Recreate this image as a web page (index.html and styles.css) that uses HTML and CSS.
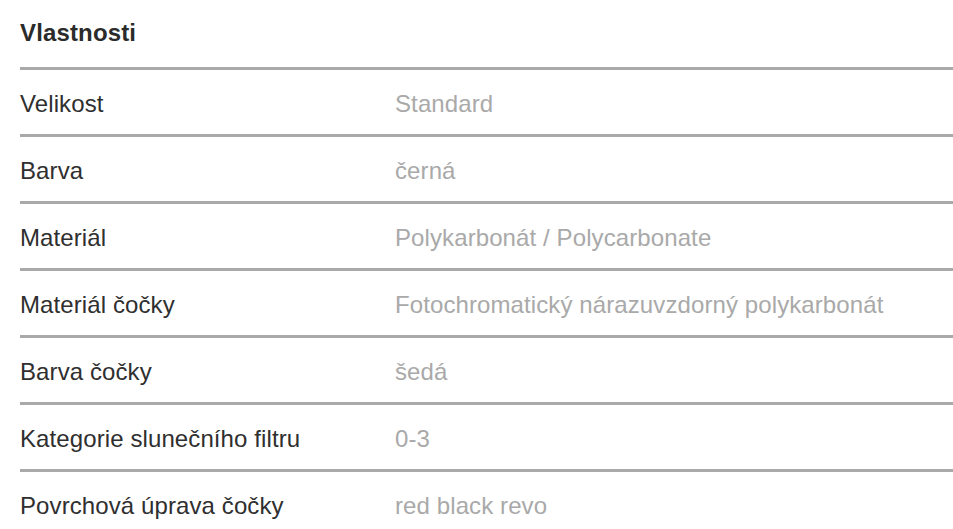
FILE: index.html
```html
<!DOCTYPE html>
<html lang="cs">
<head>
<meta charset="utf-8">
<title>Vlastnosti</title>
<link rel="stylesheet" href="styles.css">
</head>
<body>
<section class="props">
  <h2 class="props-title">Vlastnosti</h2>
  <dl class="props-list">
    <div class="prop-row"><dt class="prop-name">Velikost</dt><dd class="prop-value">Standard</dd></div>
    <div class="prop-row"><dt class="prop-name">Barva</dt><dd class="prop-value">černá</dd></div>
    <div class="prop-row"><dt class="prop-name">Materiál</dt><dd class="prop-value">Polykarbonát / Polycarbonate</dd></div>
    <div class="prop-row"><dt class="prop-name">Materiál čočky</dt><dd class="prop-value">Fotochromatický nárazuvzdorný polykarbonát</dd></div>
    <div class="prop-row"><dt class="prop-name">Barva čočky</dt><dd class="prop-value">šedá</dd></div>
    <div class="prop-row"><dt class="prop-name">Kategorie slunečního filtru</dt><dd class="prop-value">0-3</dd></div>
    <div class="prop-row"><dt class="prop-name">Povrchová úprava čočky</dt><dd class="prop-value">red black revo</dd></div>
  </dl>
</section>
</body>
</html>
```
FILE: styles.css
```css
html, body {
  margin: 0;
  padding: 0;
  background: #ffffff;
}
body {
  font-family: "Liberation Sans", Arial, Helvetica, sans-serif;
  color: #333333;
  overflow: hidden;
}
.props {
  padding-left: 20px;
}
.props-title {
  margin: 0;
  font-size: 24px;
  font-weight: bold;
  line-height: 28px;
  padding: 19px 0 20px;
  color: #2b2b2b;
  letter-spacing: 0.15px;
}
.props-list {
  margin: 0;
  padding: 0;
}
.prop-row {
  display: grid;
  grid-template-columns: 375px 1fr;
  border-top: 3px solid #a9a9a9;
  padding: 20px 0 17px;
  height: 27px;
  box-sizing: content-box;
  font-size: 24px;
  line-height: 27px;
  letter-spacing: 0.1px;
}
.prop-name {
  margin: 0;
  color: #2f2f2f;
}
.prop-value {
  margin: 0;
  color: #a9a9a9;
}
```
